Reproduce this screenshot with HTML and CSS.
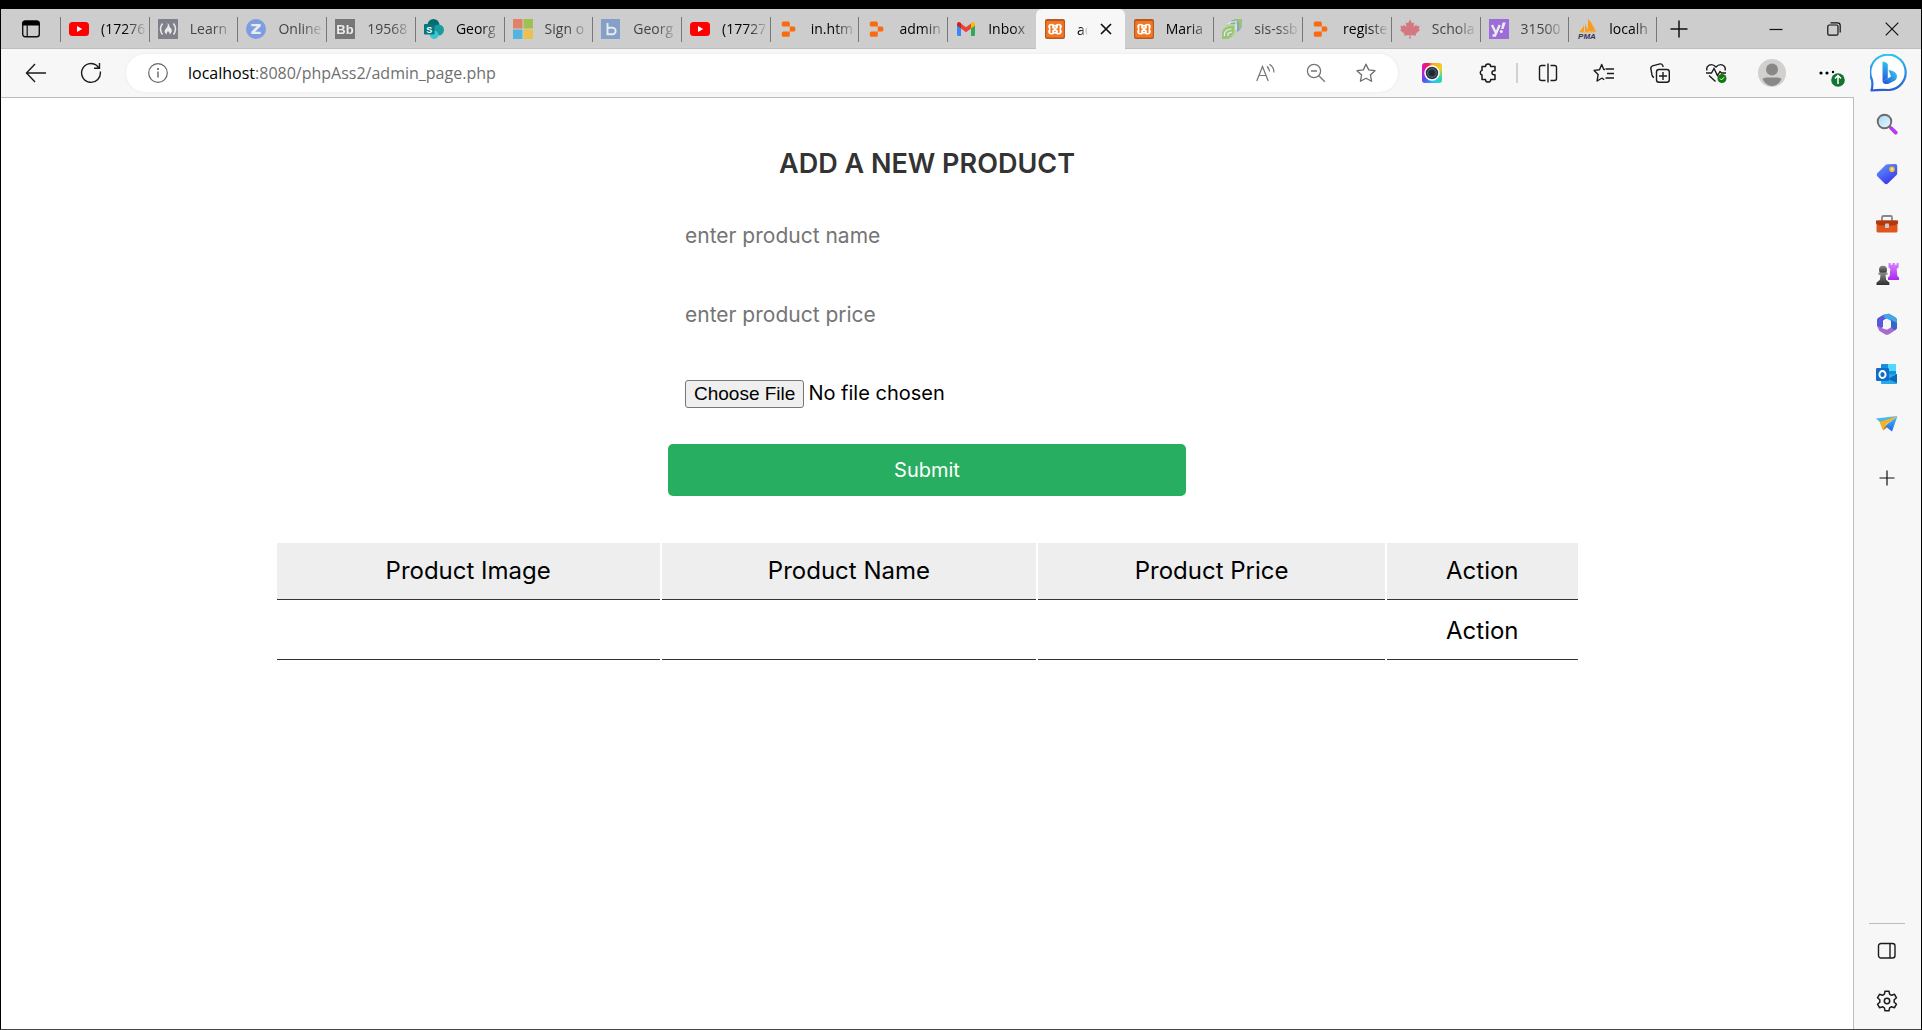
FILE: index.html
```html
<!DOCTYPE html>
<html lang="en">
<head>
<meta charset="utf-8">
<title>admin page</title>
<link rel="stylesheet" href="styles.css">
</head>
<body>
<svg class="defs" aria-hidden="true">
  <defs>
    <linearGradient id="tagG" x1="0" y1="0" x2="0.6" y2="1"><stop offset="0" stop-color="#62a0fa"/><stop offset="1" stop-color="#3a35ee"/></linearGradient>
    <linearGradient id="bing1" x1="0" y1="0" x2="0" y2="1"><stop offset="0" stop-color="#2fc4f0"/><stop offset="1" stop-color="#2a5bd8"/></linearGradient>
    <linearGradient id="bing2" x1="0" y1="1" x2="1" y2="0"><stop offset="0" stop-color="#1c4fd0"/><stop offset="1" stop-color="#3fd0f0"/></linearGradient>
    <linearGradient id="lens" x1="0" y1="0" x2="1" y2="1"><stop offset="0" stop-color="#a9d8f8"/><stop offset="1" stop-color="#eaf6fe"/></linearGradient>
    <linearGradient id="rook" x1="0" y1="0" x2="0" y2="1"><stop offset="0" stop-color="#d784fb"/><stop offset="1" stop-color="#a928f2"/></linearGradient>
    <linearGradient id="pawn" x1="0" y1="0" x2="0" y2="1"><stop offset="0" stop-color="#8a8a8a"/><stop offset="1" stop-color="#2e2e2e"/></linearGradient>
    <linearGradient id="plane" x1="0" y1="0" x2="0" y2="1"><stop offset="0" stop-color="#4cc4f2"/><stop offset="1" stop-color="#1d62e8"/></linearGradient>
    <symbol id="youtube" viewBox="0 0 20 20"><rect y="3" width="20" height="14" rx="3.5" fill="#f00"/><path d="M8 7l5.2 3L8 13z" fill="#fff"/></symbol>
    <symbol id="replit" viewBox="0 0 20 20"><path d="M4.300 2.500h5a1.500 1.500 0 0 1 1.500 1.500v3.600H4.300A1.500 1.500 0 0 1 2.800 6.100V4a1.500 1.500 0 0 1 1.500-1.500zM10.800 7.600h4A1.500 1.500 0 0 1 16.300 9.100v2a1.500 1.500 0 0 1-1.500 1.500h-4zM4.300 12.600h6.500v3.600a1.500 1.500 0 0 1-1.500 1.500h-5a1.500 1.500 0 0 1-1.500-1.500v-2.100a1.500 1.500 0 0 1 1.500-1.500z" fill="#fb6a0c"/></symbol>
    <symbol id="xampp" viewBox="0 0 20 20"><rect width="20" height="20" rx="2" fill="#b85a20"/><rect x="1.200" y="2" width="17.600" height="16.500" rx="1" fill="#f37623"/><path d="M6.500 4.800C8.500 4.800 8.500 6 10 6s1.500-1.200 3.500-1.200c2.200 0 3.300 1.300 3.300 3 0 1-.8 1.700-.8 2.400s.8 1.400.8 2.400c0 1.700-1.100 3-3.300 3-2 0-2-1.200-3.500-1.200s-1.500 1.200-3.500 1.200c-2.200 0-3.300-1.300-3.300-3 0-1 .8-1.700.8-2.400s-.8-1.400-.8-2.400c0-1.700 1.100-3 3.300-3z" fill="#fff"/><path d="M6.300 7.200v6M13.700 7.200v6" stroke="#f37623" stroke-width="1.800" stroke-linecap="round"/><path d="M6.500 10.200h2M11.500 10.200h2M10 7.500v1M10 12v1" stroke="#f37623" stroke-width="1.400"/></symbol>
  </defs>
</svg>

<header class="chrome">
  <div class="tabstrip">
    <button class="tab-actions" aria-label="Tab actions menu"><svg width="20" height="20" viewBox="0 0 20 20"><rect x="1.700" y="2.200" width="16.600" height="15.600" rx="2.500" fill="none" stroke="#111" stroke-width="1.400"/><path d="M1.500 6.500V4a2.500 2.500 0 0 1 2.500-2.500h12A2.500 2.500 0 0 1 18.500 4v2.500z"/><path d="M6.200 6v11.500" stroke="#111" stroke-width="1.200"/></svg></button>
    <div class="tabs" role="tablist">
      <button class="tab" role="tab"><svg class="favicon"><use href="#youtube"/></svg><span>(17276</span></button>
      <button class="tab asleep" role="tab"><svg class="favicon" viewBox="0 0 20 20"><rect width="20" height="20" fill="#4d4d62"/><path d="M4.500 4.500q-4 5.500 0 11M15.500 4.500q4 5.500 0 11" fill="none" stroke="#fff" stroke-width="1.500"/><path d="M9.500 4c3 2 1 4 3.300 5 2 2.500.7 5-1.300 6.500.8-2-.8-2-1.500-3.800-.8 2-2 2.300-1 3.800-4-2-2-5-.5-6.500 1.500-1.500 1.500-3 1-5z" fill="#fff"/></svg><span>Learn</span></button>
      <button class="tab asleep" role="tab"><svg class="favicon" viewBox="0 0 20 20"><circle cx="10" cy="10" r="10" fill="#4a7df0"/><path d="M5.300 5h9.400v2.200l-5.500 5.500h5.500V15H5.300v-2.300l5.500-5.400H5.300z" fill="#fff"/></svg><span>Online</span></button>
      <button class="tab asleep" role="tab"><svg class="favicon" viewBox="0 0 20 20"><rect width="20" height="20" fill="#3f3f3f"/><text x="10" y="15" text-anchor="middle" class="glyph" font-size="13" fill="#fff">Bb</text></svg><span>19568</span></button>
      <button class="tab" role="tab"><svg class="favicon" viewBox="0 0 20 20"><circle cx="9.500" cy="6" r="6" fill="#036c70"/><circle cx="14.500" cy="11" r="5.500" fill="#1a9ba1"/><circle cx="10.200" cy="15.700" r="4.300" fill="#37c6d0"/><rect y="5" width="10.500" height="10.500" rx="1" fill="#03787c"/><text x="5.200" y="13.500" text-anchor="middle" class="glyph" font-size="9" fill="#fff">S</text></svg><span>Georg</span></button>
      <button class="tab asleep" role="tab"><svg class="favicon" viewBox="0 0 20 20"><path d="M0 0h9.500v9.500H0z" fill="#f25022"/><path d="M10.500 0H20v9.500h-9.500z" fill="#7fba00"/><path d="M0 10.500h9.500V20H0z" fill="#00a4ef"/><path d="M10.500 10.500H20V20h-9.500z" fill="#ffb900"/></svg><span>Sign o</span></button>
      <button class="tab asleep" role="tab"><svg class="favicon" viewBox="0 0 20 20"><rect width="19" height="20" fill="#5383c8"/><path d="M6.500 4v11.200h4.300a3.300 3.300 0 1 0 0-6.500H6.500" fill="none" stroke="#fff" stroke-width="1.900"/></svg><span>Georg</span></button>
      <button class="tab" role="tab"><svg class="favicon"><use href="#youtube"/></svg><span>(17727</span></button>
      <button class="tab" role="tab"><svg class="favicon"><use href="#replit"/></svg><span>in.htm</span></button>
      <button class="tab" role="tab"><svg class="favicon"><use href="#replit"/></svg><span>admin</span></button>
      <button class="tab" role="tab"><svg class="favicon" viewBox="0 0 20 20"><path d="M1 6l4 3v8H2.200A1.200 1.200 0 0 1 1 15.800z" fill="#4285f4"/><path d="M19 6l-4 3v8h2.800a1.200 1.200 0 0 0 1.200-1.200z" fill="#34a853"/><path d="M5 4.500l5 3.800 5-3.800v5L10 13.300 5 9.500z" fill="#ea4335"/><path d="M1 6V5a2 2 0 0 1 3.200-1.600L5 4v5.500L1 6.500z" fill="#c5221f"/><path d="M19 6V5a2 2 0 0 0-3.200-1.600L15 4v5.500l4-3z" fill="#fbbc04"/></svg><span>Inbox</span></button>
      <button class="tab active" role="tab" aria-selected="true"><svg class="favicon"><use href="#xampp"/></svg><span>ad</span><svg class="close" viewBox="0 0 12 12"><path d="M1 1l10 10M11 1L1 11" stroke="#111" stroke-width="1.700"/></svg></button>
      <button class="tab after-active" role="tab"><svg class="favicon"><use href="#xampp"/></svg><span>Maria</span></button>
      <button class="tab asleep" role="tab"><svg class="favicon" viewBox="0 0 20 20"><path d="M10 1h10v6q-2 5-5 6V5H8z" fill="#5a86cc"/><path d="M12 0h8v7l-3 4V3h-7z" fill="#77c043"/><path d="M5 5h9v8q-2 5-6 5h-1V11H3z" fill="#a8dd70"/><path d="M0 19v-6q2-6 9-6h3v5q-1 6-6 8H0z" fill="#77c043"/><path d="M2.500 17v-3q2-4 7-4M6 17v-2.500l4-1.500M6 5q3-2.500 8-2.200V11" fill="none" stroke="#fff" stroke-width="1.200"/></svg><span>sis-ssb</span></button>
      <button class="tab" role="tab"><svg class="favicon"><use href="#replit"/></svg><span>registe</span></button>
      <button class="tab asleep" role="tab"><svg class="favicon" viewBox="0 0 20 20"><path d="M10 .5l2 3.700 2.300-1-.8 5 2.700-2.700.6 1.700 2.900-.5-1 3.300L20 11l-4.500 4 .7 1.700-5.600-.8.100 3.800H9.300l.1-3.800-5.600.8.700-1.700L0 11l1.300-1-1-3.300 2.900.5.600-1.700 2.700 2.700-.8-5 2.300 1z" fill="#d8404c"/></svg><span>Schola</span></button>
      <button class="tab asleep" role="tab"><svg class="favicon" viewBox="0 0 20 20"><rect width="20" height="20" fill="#7d2ee0"/><path d="M3 6l3.700 7.500M10.700 6L6 16.500H3.500" fill="none" stroke="#fff" stroke-width="2.400"/><path d="M13.500 3.500h3.300L14.500 10h-2.400z" fill="#fff"/><circle cx="12.300" cy="12.500" r="1.600" fill="#fff"/></svg><span>31500</span></button>
      <button class="tab last" role="tab"><svg class="favicon" viewBox="0 0 20 20"><path d="M7 2q1 6-5 11h5zM8 5v8h4zM11 0q6 5 5.500 13L11 12zM16 6l3 7h-2z" fill="#f89c1c"/><path d="M3 13.200h15" stroke="#f8b050" stroke-width="1"/><text x="10" y="19.500" text-anchor="middle" class="glyph italic" font-size="8" fill="#33335c">PMA</text></svg><span>localh</span></button>
    </div>
    <button class="new-tab" aria-label="New tab"><svg width="18" height="18" viewBox="0 0 18 18"><path d="M9 .5v17M.5 9h17" stroke="#111" stroke-width="1.500"/></svg></button>
    <div class="window-controls">
      <button aria-label="Minimize"><svg width="14" height="14" viewBox="0 0 14 14"><path d="M.5 7.500h13" stroke="#111" stroke-width="1.200"/></svg></button>
      <button aria-label="Restore"><svg width="14" height="14" viewBox="0 0 14 14"><g fill="none" stroke="#111" stroke-width="1.200"><rect x=".8" y="3" width="10.200" height="10.200" rx="1.500"/><path d="M3.500.8h7a2.700 2.700 0 0 1 2.700 2.700v7"/></g></svg></button>
      <button aria-label="Close"><svg width="14" height="14" viewBox="0 0 14 14"><path d="M.7.700l12.600 12.600M13.300.700L.7 13.300" stroke="#111" stroke-width="1.200"/></svg></button>
    </div>
  </div>

  <div class="toolbar">
    <button class="nav" aria-label="Back"><svg width="22" height="20" viewBox="0 0 22 20"><path d="M10 1L1.500 10l8.500 9M1.500 10H21" fill="none" stroke="#1b1b1b" stroke-width="1.400"/></svg></button>
    <button class="nav" aria-label="Refresh"><svg width="22" height="22" viewBox="0 0 22 22"><path d="M20.300 9.500A9.400 9.400 0 1 1 16.500 3.300L18.500 5.500M19.500 1v5.200h-5.500" fill="none" stroke="#1b1b1b" stroke-width="1.400"/></svg></button>
    <div class="address">
      <button class="pill-button info" aria-label="View site information"><svg width="20" height="20" viewBox="0 0 20 20"><circle cx="10" cy="10" r="9.300" fill="none" stroke="#666" stroke-width="1.200"/><path d="M10 8.500v6" stroke="#555" stroke-width="1.300"/><circle cx="10" cy="6" r="1" fill="#555"/></svg></button>
      <div class="url" role="textbox" aria-label="Address"><b>localhost</b>:8080/phpAss2/admin_page.php</div>
      <button class="pill-button" aria-label="Read aloud"><svg width="20" height="20" viewBox="0 0 20 20"><path d="M.8 18L6.500 3.500 12.200 18M3 12.500h7M11 3.300q2.500 2 2.500 5.200M13.500 1.200q4.500 3.300 4.500 8.300M11.500 4q1 1 1 2.500" fill="none" stroke="#757575" stroke-width="1.200"/></svg></button>
      <button class="pill-button" aria-label="Zoom"><svg width="20" height="20" viewBox="0 0 20 20"><g fill="none" stroke="#757575" stroke-width="1.300"><circle cx="8" cy="8" r="6.600"/><path d="M12.800 12.800l6 6M5 8h6"/></g></svg></button>
      <button class="pill-button" aria-label="Add to favorites"><svg width="20" height="20" viewBox="0 0 20 20"><path d="M10 1.200l2.700 5.700 6.300.8-4.600 4.300 1.200 6.300L10 15.300l-5.600 3 1.200-6.300L1 7.700l6.300-.8z" fill="none" stroke="#6b6b6b" stroke-width="1.300" stroke-linejoin="round"/></svg></button>
    </div>
    <button class="tool" aria-label="Screenshot extension"><span class="camera"><svg width="16" height="16" viewBox="0 0 16 16"><circle cx="8" cy="8" r="7" fill="#28343f" stroke="#fff" stroke-width="1.500"/><circle cx="8" cy="8" r="4.300" fill="none" stroke="#56687a"/><circle cx="8" cy="8" r="2.500" fill="#1c2832"/></svg></span></button>
    <button class="tool" aria-label="Extensions"><svg width="20" height="20" viewBox="0 0 20 20"><path d="M3.500 4.500H7a2.600 2.600 0 0 1 5.200 0h4.300v4.300h-1a2 2 0 1 0 0 4h1v4.700h-4.300a2.600 2.600 0 0 1-5.200 0H3.500V13a2.400 2.400 0 0 1 0-4.600z" transform="translate(.5 -1)" fill="none" stroke="#1b1b1b" stroke-width="1.500" stroke-linejoin="round"/></svg></button>
    <span class="divider"></span>
    <button class="tool" aria-label="Split screen"><svg width="20" height="20" viewBox="0 0 20 20"><path d="M7.500 2.500h-4a2 2 0 0 0-2 2v11a2 2 0 0 0 2 2h4M12.500 2.500h4a2 2 0 0 1 2 2v11a2 2 0 0 1-2 2h-4M10 .5v19" fill="none" stroke="#1b1b1b" stroke-width="1.400"/></svg></button>
    <button class="tool" aria-label="Favorites"><svg width="22" height="20" viewBox="0 0 22 20"><path d="M12 6.500h-1.200L8.700 1.500 6.500 6.700l-5.400.7 4 4.200-1 6.400 5-3M12.500 6h8.500M14 10.500h7M12.500 15h8.500M9 15l2.200 1.700" fill="none" stroke="#1b1b1b" stroke-width="1.400" stroke-linejoin="round"/></svg></button>
    <button class="tool" aria-label="Collections"><svg width="20" height="20" viewBox="0 0 20 20"><g fill="none" stroke="#1b1b1b" stroke-width="1.400"><rect x="6.500" y="6.500" width="12.800" height="12.800" rx="2.500"/><path d="M13 9v8M9 13h8M4 14.500Q2.500 14 2 12L.8 5.500Q.6 3.500 2.500 2.800L10 .9q2-.3 2.700 1.500l.5 1.600"/></g></svg></button>
    <button class="tool" aria-label="Browser essentials"><svg width="22" height="20" viewBox="0 0 22 20"><path d="M2 7.500C.5 2.500 6.500-.8 11 4 15.500-.8 21.500 2.500 20 7.500M1 10h5.500L9 5.500l3.500 7 2.500-4 1.500 1.500H21M4 12.500l6.500 6" fill="none" stroke="#1b1b1b" stroke-width="1.400"/><circle cx="17" cy="15.500" r="4.500" fill="#0f7b0f"/><path d="M15 15.500l1.500 1.500 2.600-2.800" fill="none" stroke="#fff"/></svg></button>
    <button class="tool" aria-label="Profile"><svg width="28" height="28" viewBox="0 0 28 28"><circle cx="14" cy="14" r="14" fill="#d2d0ce"/><circle cx="14" cy="10.500" r="6" fill="#8a8886"/><path d="M4.500 20q1.500-1.500 3.500-1.500h12q2 0 3.500 1.500Q20 27 14 27T4.500 20z" fill="#8a8886"/></svg></button>
    <button class="tool more" aria-label="Settings and more"><svg width="28" height="28" viewBox="0 0 28 28"><circle cx="4" cy="14" r="1.600"/><circle cx="10" cy="14" r="1.600"/><circle cx="16" cy="13" r="1.200"/><circle cx="21" cy="21" r="6.800" fill="#137333"/><path d="M21 25v-8M18 19.500l3-3 3 3" fill="none" stroke="#fff" stroke-width="1.500"/></svg></button>
    <button class="bing" aria-label="Discover"><svg width="38" height="38" viewBox="0 0 38 38"><path d="M1.500 36.500Q3 32 2 26A17.700 17.700 0 1 1 19 36Q8 35.500 1.500 36.500z" fill="#fff" stroke="url(#bing1)" stroke-width="2.200" stroke-linejoin="round"/><path d="M12.500 7.500q4.500.5 5.300 3v14l-5.300 3z" fill="url(#bing1)"/><path d="M12.500 27.500L21 22.500l-2.500-6.500q8 1 8.500 6 0 3-2 4.500l-7 3.500q-4.500.5-5.500-2.500z" fill="url(#bing2)"/></svg></button>
  </div>
</header>

<div class="workspace">
  <main class="page">
    <div class="container">
      <form class="product-form">
        <h3>ADD A NEW PRODUCT</h3>
        <input type="text" class="box" placeholder="enter product name" aria-label="product name">
        <input type="text" class="box" placeholder="enter product price" aria-label="product price">
        <input type="file" class="box" aria-label="product image">
        <button type="submit" class="btn">Submit</button>
      </form>
      <table class="products">
        <colgroup><col class="c-image"><col class="c-name"><col class="c-price"><col class="c-action"></colgroup>
        <thead><tr><th>Product Image</th><th>Product Name</th><th>Product Price</th><th>Action</th></tr></thead>
        <tbody><tr><td></td><td></td><td></td><td>Action</td></tr></tbody>
      </table>
    </div>
  </main>

  <aside class="sidebar">
    <button aria-label="Search"><svg width="22" height="22" viewBox="0 0 22 22"><path d="M13.500 13.500l2.500 2.500" stroke="#777" stroke-width="3"/><path d="M15.500 15.500l4.200 4.200" stroke="#b93af5" stroke-width="3.800" stroke-linecap="round"/><circle cx="8.500" cy="8.500" r="6.800" fill="url(#lens)" stroke="#6b6b6b" stroke-width="1.900"/></svg></button>
    <button aria-label="Shopping"><svg width="22" height="22" viewBox="0 0 22 22"><path d="M11.500 1.200l7.700-.2q2 0 2 2v7.200q0 1-.7 1.700l-8.700 8.700q-1.600 1.300-3.200 0L1.300 13.300q-1.200-1.500 0-3l8.500-8.500z" fill="url(#tagG)"/><circle cx="16" cy="6.200" r="2" fill="#ddd" stroke="#f6c21c" stroke-width="1.600"/></svg></button>
    <button aria-label="Tools"><svg width="24" height="22" viewBox="0 0 24 22"><path d="M7 8V4.500Q7 3 8.500 3h7Q17 3 17 4.500V8" fill="none" stroke="#888" stroke-width="1.800"/><rect x="1.500" y="7.500" width="21" height="12" rx="1.500" fill="#e0551c"/><path d="M1 7.500h22v3q-2 2-5 2H6q-3 0-5-2z" fill="#b03a0c"/><rect x="10" y="10.500" width="4" height="4.500" rx=".8" fill="#ccc"/></svg></button>
    <button aria-label="Games"><svg width="24" height="24" viewBox="0 0 24 24"><path d="M13.500 1h2.200v1.800h1.800V1h2.400v1.800h1.700V1h2v4.500l-1.900 1.300.6 7.200 1.700 1.500V18H13v-2.500l1.700-1.500.6-7.200-1.800-1.300z" fill="url(#rook)"/><circle cx="8" cy="7.700" r="4" fill="url(#pawn)"/><path d="M3.500 10.500h9v2.200h-2l.6 5 3.200 2.700q.8 2.600-.6 2.600H2.300q-1.500 0-.6-2.600l3.200-2.700.6-5h-2z" fill="url(#pawn)"/></svg></button>
    <button aria-label="Microsoft 365"><svg width="22" height="22" viewBox="0 0 22 22"><path d="M7.500 1.700L13 .8l6.500 3.700q1.500 1 1.500 3v4l-6-4-4-2.500-4 2.500V14l-2.500 1.500L1 13V7q0-1.500 1.300-2.300z" fill="#5a58d6"/><path d="M13 .8l6.500 3.700q1.500 1 1.500 3v4l-6-3.800L7.500 4q.5-3.500 5.500-3.200z" fill="#3fa9e8"/><path d="M21 10v4.500q0 1.500-1.500 2.500l-6.500 4.200q-2 1-4 0L3.500 18 1 13l6 2.500 4 1.200 4-2.500V7z" fill="#a56bd0"/><path d="M21 10v5q-.5 2-3 2l-3-3V7z" fill="#3466c8"/><path d="M11 7l4 2.300v4.500L11 16l-4-2.200V9.300z" fill="#f7f7f7"/></svg></button>
    <button aria-label="Outlook"><svg width="22" height="22" viewBox="0 0 22 22"><path d="M5 2q0-1 1-1h13q1 0 1 1v10H5z" fill="#1490df"/><path d="M12 1h7q1 0 1 1v6h-8z" fill="#50d9ff"/><path d="M5 12l16-1v9q0 1-1 1H6q-1 0-1-1z" fill="#28a8ea"/><path d="M12 16l9-5v9z" fill="#1066b5"/><rect y="5" width="13" height="13" rx="1.300" fill="#0f6cc8"/><ellipse cx="6.500" cy="11.500" rx="3.100" ry="3.500" fill="none" stroke="#fff" stroke-width="1.900"/></svg></button>
    <button aria-label="Drop"><svg width="22" height="22" viewBox="0 0 22 22"><path d="M0 5.500L21.500 3 6 11z" fill="#45b8ee"/><path d="M21.500 3L16 18.500 9 13z" fill="url(#plane)"/><path d="M3.500 9L21.500 3 9 12.500l-2 5z" fill="#f5b323"/><path d="M9 12.500L7 17.500l4-3z" fill="#c97a10"/></svg></button>
    <button class="customize" aria-label="Customize"><svg width="16" height="16" viewBox="0 0 16 16"><path d="M8 .5v15M.5 8h15" stroke="#111" stroke-width="1.200"/></svg></button>
    <div class="sidebar-bottom">
      <button aria-label="Hide sidebar"><svg width="20" height="18" viewBox="0 0 20 18"><rect x="1.500" y="1.500" width="16.500" height="14.500" rx="2.500" fill="none" stroke="#1b1b1b" stroke-width="1.400"/><path d="M13 1.500V16" stroke="#1b1b1b" stroke-width="1.400"/></svg></button>
      <button aria-label="Settings"><svg width="22" height="22" viewBox="0 0 22 22"><g fill="none" stroke="#1b1b1b" stroke-width="1.500" stroke-linejoin="round"><path d="M9 1.200h4l.6 3 1.900 1.100 3-1 2 3.500-2.300 2v2.400l2.300 2-2 3.500-3-1-1.900 1.100-.6 3H9l-.6-3-1.900-1.100-3 1-2-3.500 2.300-2V9.800l-2.300-2 2-3.500 3 1 1.900-1.100z"/><circle cx="11" cy="11" r="2.700"/></g></svg></button>
    </div>
  </aside>
</div>
</body>
</html>
```

FILE: styles.css
```css
* { box-sizing: border-box; }

body {
  margin: 0;
  min-height: 100vh;
  display: flex;
  flex-direction: column;
  border: 1px solid #000;
  border-top-width: 9px;
  border-bottom-color: #444;
  background: #f7f7f7;
  font-family: "Open Sans", "Noto Sans", sans-serif;
  color: #000;
}

button {
  border: 0;
  padding: 0;
  background: none;
  font: inherit;
  color: inherit;
}

svg { display: block; flex: none; }
.defs { position: absolute; width: 0; height: 0; }
.glyph { font-family: "Liberation Sans", sans-serif; font-weight: bold; }
.italic { font-style: italic; }

/* Tab strip */
.tabstrip {
  display: flex;
  height: 40px;
  background: #cdcdcd;
  border-bottom: 1px solid #bdbdbd;
}

.tab-actions { width: 59px; display: grid; place-items: center; }
.tabs { flex: 1; display: flex; min-width: 0; }

.tab {
  flex: 1 1 0;
  min-width: 0;
  display: flex;
  align-items: center;
  gap: 12px;
  padding: 0 0 0 9px;
  font-size: 14px;
  text-align: left;
  background: linear-gradient(#777, #777) no-repeat 0 8px / 1px 25px;
}

.tab span {
  flex: 1;
  min-width: 0;
  overflow: hidden;
  white-space: nowrap;
  mask-image: linear-gradient(to right, #000 calc(100% - 24px), transparent calc(100% - 2px));
}

.favicon { width: 20px; height: 20px; }
.asleep .favicon { opacity: .6; }
.asleep { color: #444; }
.tab.last { background: linear-gradient(#777, #777) no-repeat 0 8px / 1px 25px, linear-gradient(#777, #777) no-repeat 100% 8px / 1px 25px; }
.tab.after-active { background: none; }

.tab.active {
  background: #f7f7f7;
  border-radius: 6px 6px 0 0;
  margin-bottom: -1px;
}
.tab.active span { mask-image: linear-gradient(to right, #000 30%, transparent); }
.close { width: 12px; height: 12px; margin-right: 13px; }

.new-tab { width: 44px; display: grid; place-items: center; }
.window-controls { display: flex; margin-left: 46px; }
.window-controls button { width: 58px; display: grid; place-items: center; }

/* Toolbar */
.toolbar {
  display: flex;
  align-items: center;
  height: 48px;
  padding-left: 7px;
}
.nav { width: 55px; display: grid; place-items: center; }

.address {
  flex: 1;
  min-width: 0;
  height: 38px;
  margin: 0 6px 0 8px;
  padding: 0 7px;
  display: flex;
  align-items: center;
  border-radius: 19px;
  background: #fff;
  box-shadow: 0 0 3px #e6e6e6;
}
.pill-button { width: 50px; display: grid; place-items: center; }
.url { flex: 1; min-width: 0; padding-left: 5px; font-size: 16px; color: #6f6f6f; white-space: nowrap; overflow: hidden; }
.url b { font-weight: normal; color: #000; }

.tool { width: 56px; display: grid; place-items: center; }
.more { padding-left: 6px; }
.divider { width: 4px; height: 20px; border-left: 2px solid #d0d0d0; }
.bing { width: 65px; display: grid; place-items: center; }
.camera {
  width: 20px;
  height: 20px;
  display: grid;
  place-items: center;
  border-radius: 3px;
  background: conic-gradient(#f5a623, #f0d020 60deg, #2fd6b0 120deg, #20c8f0 170deg, #5a4cf0 230deg, #e010c0 290deg, #f02050 340deg, #f5a623);
}

/* Web page */
.workspace { flex: 1; display: flex; }

.page {
  flex: 1;
  min-width: 0;
  background: #fff;
  border-top: 1px solid #bdbdbd;
  border-right: 1px solid #bdbdbd;
  font-family: Inter, "Open Sans", sans-serif;
}

.container { max-width: 1305px; margin: 0 auto; padding: 46px 0; }

.product-form {
  max-width: 518px;
  margin: 0 auto 45px;
  display: flex;
  flex-direction: column;
  gap: 24px;
}

.product-form h3 {
  margin: 0;
  font-size: 27px;
  line-height: 40px;
  font-weight: 600;
  text-align: center;
  color: #333;
}

.box {
  width: 100%;
  height: 55px;
  padding: 0 17px;
  border: 0;
  background: #fff;
  font-family: inherit;
  font-size: 21px;
  color: #000;
}
.box::placeholder { color: #757575; }
.box[type="file"] { height: 54px; padding: 14px 17px; font-size: 20px; line-height: 27px; }
.box::file-selector-button {
  height: 28px;
  margin-right: 4px;
  padding: 0 8px;
  border: 1px solid #767676;
  border-radius: 3px;
  background: #efefef;
  font-family: "Liberation Sans", Arial, sans-serif;
  font-size: 19px;
  color: #000;
}

.btn {
  height: 52px;
  border-radius: 5px;
  background: #27ae60;
  color: #fff;
  font-size: 20px;
}

.products {
  width: 100%;
  table-layout: fixed;
  border-spacing: 2px;
  font-size: 24px;
  line-height: 26px;
}
.products th,
.products td {
  height: 58px;
  padding: 15px;
  border-bottom: 1px solid #333;
  font-weight: 400;
  text-align: center;
}
.products th { height: 57px; background: #eee; }
.c-image { width: 29.600%; }
.c-name { width: 28.900%; }
.c-price { width: 26.800%; }
.c-action { width: 14.700%; }

/* Sidebar */
.sidebar {
  width: 67px;
  padding: 2px 2px 0 0;
  display: flex;
  flex-direction: column;
  align-items: center;
}
.sidebar button { width: 50px; height: 50px; display: grid; place-items: center; }
.sidebar .customize { margin-top: 4px; }
.sidebar-bottom { margin-top: auto; padding: 2px 0 3px; border-top: 1px solid #bdbdbd; width: 36px; display: grid; justify-content: center; }
```
